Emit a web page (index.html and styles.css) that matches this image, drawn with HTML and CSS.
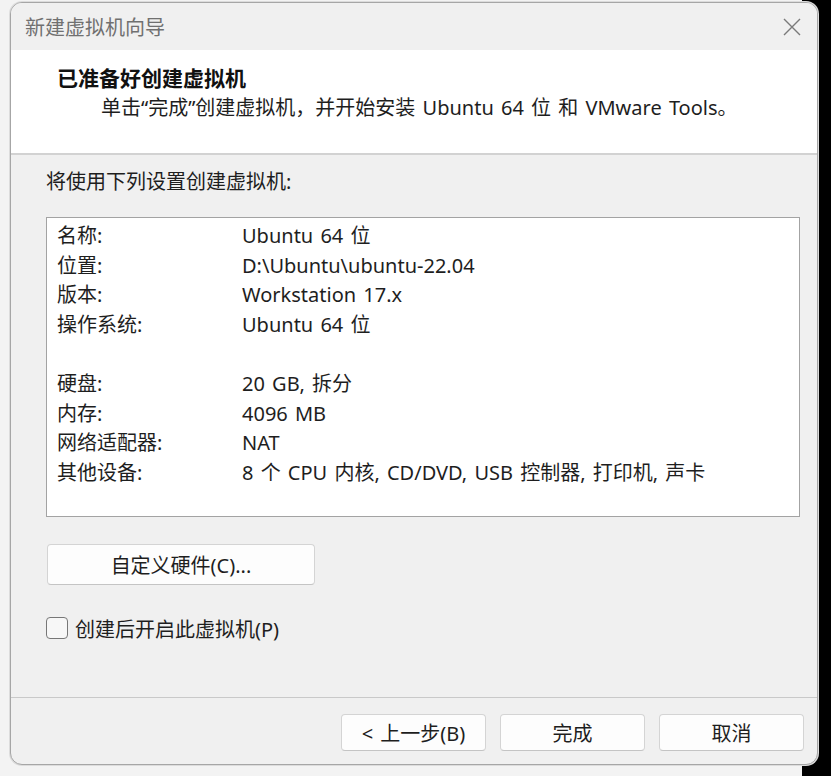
FILE: index.html
```html
<!DOCTYPE html>
<html lang="zh-CN">
<head>
<meta charset="utf-8">
<title>新建虚拟机向导</title>
<link rel="stylesheet" href="styles.css">
</head>
<body>
<div class="window">
  <div class="titlebar">
    <span class="title">新建虚拟机向导</span>
    <svg class="close" width="18" height="18" viewBox="0 0 18 18"><path d="M1 1 L17 17 M17 1 L1 17" stroke="#7a7a7a" stroke-width="1.4" fill="none"/></svg>
  </div>
  <div class="header">
    <div class="heading">已准备好创建虚拟机</div>
    <div class="subtitle">单击“完成”创建虚拟机，并开始安装 Ubuntu 64 位 和 VMware Tools。</div>
  </div>
  <div class="content">
    <div class="intro">将使用下列设置创建虚拟机:</div>
    <div class="summary">
      <div class="row"><span class="label">名称:</span><span>Ubuntu 64 位</span></div>
      <div class="row"><span class="label">位置:</span><span>D:\Ubuntu\ubuntu-22.04</span></div>
      <div class="row"><span class="label">版本:</span><span>Workstation 17.x</span></div>
      <div class="row"><span class="label">操作系统:</span><span>Ubuntu 64 位</span></div>
      <div class="row"><span class="label"></span><span></span></div>
      <div class="row"><span class="label">硬盘:</span><span>20 GB, 拆分</span></div>
      <div class="row"><span class="label">内存:</span><span>4096 MB</span></div>
      <div class="row"><span class="label">网络适配器:</span><span>NAT</span></div>
      <div class="row"><span class="label">其他设备:</span><span>8 个 CPU 内核, CD/DVD, USB 控制器, 打印机, 声卡</span></div>
    </div>
    <button class="btn custom">自定义硬件(C)...</button>
    <label class="check"><span class="box"></span><span>创建后开启此虚拟机(P)</span></label>
  </div>
  <div class="footer">
    <button class="btn nav">&lt; 上一步(B)</button>
    <button class="btn nav">完成</button>
    <button class="btn nav">取消</button>
  </div>
</div>
</body>
</html>
```
FILE: styles.css
```css
* { box-sizing: border-box; }
html, body { margin: 0; padding: 0; }
body {
  width: 831px;
  height: 776px;
  overflow: hidden;
  background: linear-gradient(to right, #f3f3f3 0, #f3f3f3 802px, #000 802px);
  font-family: "Noto Sans", "Noto Sans CJK SC", sans-serif;
  font-size: 20px;
  word-spacing: 2px;
  color: #1e1e1e;
}
.window {
  margin: 2px 0 0 10px;
  width: 808px;
  height: 763px;
  border: 1px solid #a6a6a6;
  border-radius: 12px;
  overflow: hidden;
  background: #f0f0f0;
  display: flex;
  flex-direction: column;
  box-shadow: 0 0 0 1px #dcdcdc;
}
.titlebar {
  height: 47px;
  flex: none;
  display: flex;
  align-items: center;
  justify-content: space-between;
  padding: 0 16px 0 14px;
  background: #f0f0f0;
}
.title {
  font-family: "Noto Sans CJK SC", sans-serif;
  font-size: 20px;
  color: #707070;
}
.header {
  height: 105px;
  flex: none;
  background: #fff;
  border-bottom: 2px solid #d2d2d2;
  padding: 13px 0 0 46px;
}
.heading {
  font-family: "Noto Sans CJK SC", sans-serif;
  font-weight: bold;
  font-size: 21px;
  line-height: 28px;
  color: #111;
}
.subtitle {
  margin-top: 3px;
  line-height: 27px;
  padding-left: 44px;
  white-space: nowrap;
}
.content {
  flex: 1;
  padding: 13px 0 0 35px;
}
.intro { line-height: 28px; }
.summary {
  margin-top: 21px;
  width: 754px;
  height: 300px;
  background: #fff;
  border: 1px solid #a3a3a3;
  padding: 3px 0 0 10px;
}
.row {
  display: grid;
  grid-template-columns: 185px auto;
  height: 29.6px;
  line-height: 29.6px;
  white-space: nowrap;
}
.btn {
  font-family: "Noto Sans", "Noto Sans CJK SC", sans-serif;
  font-size: 20px;
  word-spacing: 2px;
  color: #1e1e1e;
  background: #fdfdfd;
  border: 1px solid #d4d4d4;
  border-bottom-color: #c4c4c4;
  border-radius: 4px;
  padding: 0;
  display: flex;
  align-items: center;
  justify-content: center;
}
.custom {
  margin: 27px 0 0 1px;
  width: 268px;
  height: 41px;
}
.check {
  margin-top: 32px;
  display: flex;
  align-items: center;
  gap: 7px;
  height: 22px;
}
.check .box {
  width: 22px;
  height: 22px;
  border: 1.5px solid #777;
  border-radius: 4px;
  background: #f7f7f7;
}
.footer {
  flex: none;
  height: 67px;
  border-top: 1px solid #c9c9c9;
  padding: 16px 13px 13px 0;
  display: flex;
  justify-content: flex-end;
  gap: 14px;
}
.nav {
  width: 145px;
  height: 37px;
}
```
